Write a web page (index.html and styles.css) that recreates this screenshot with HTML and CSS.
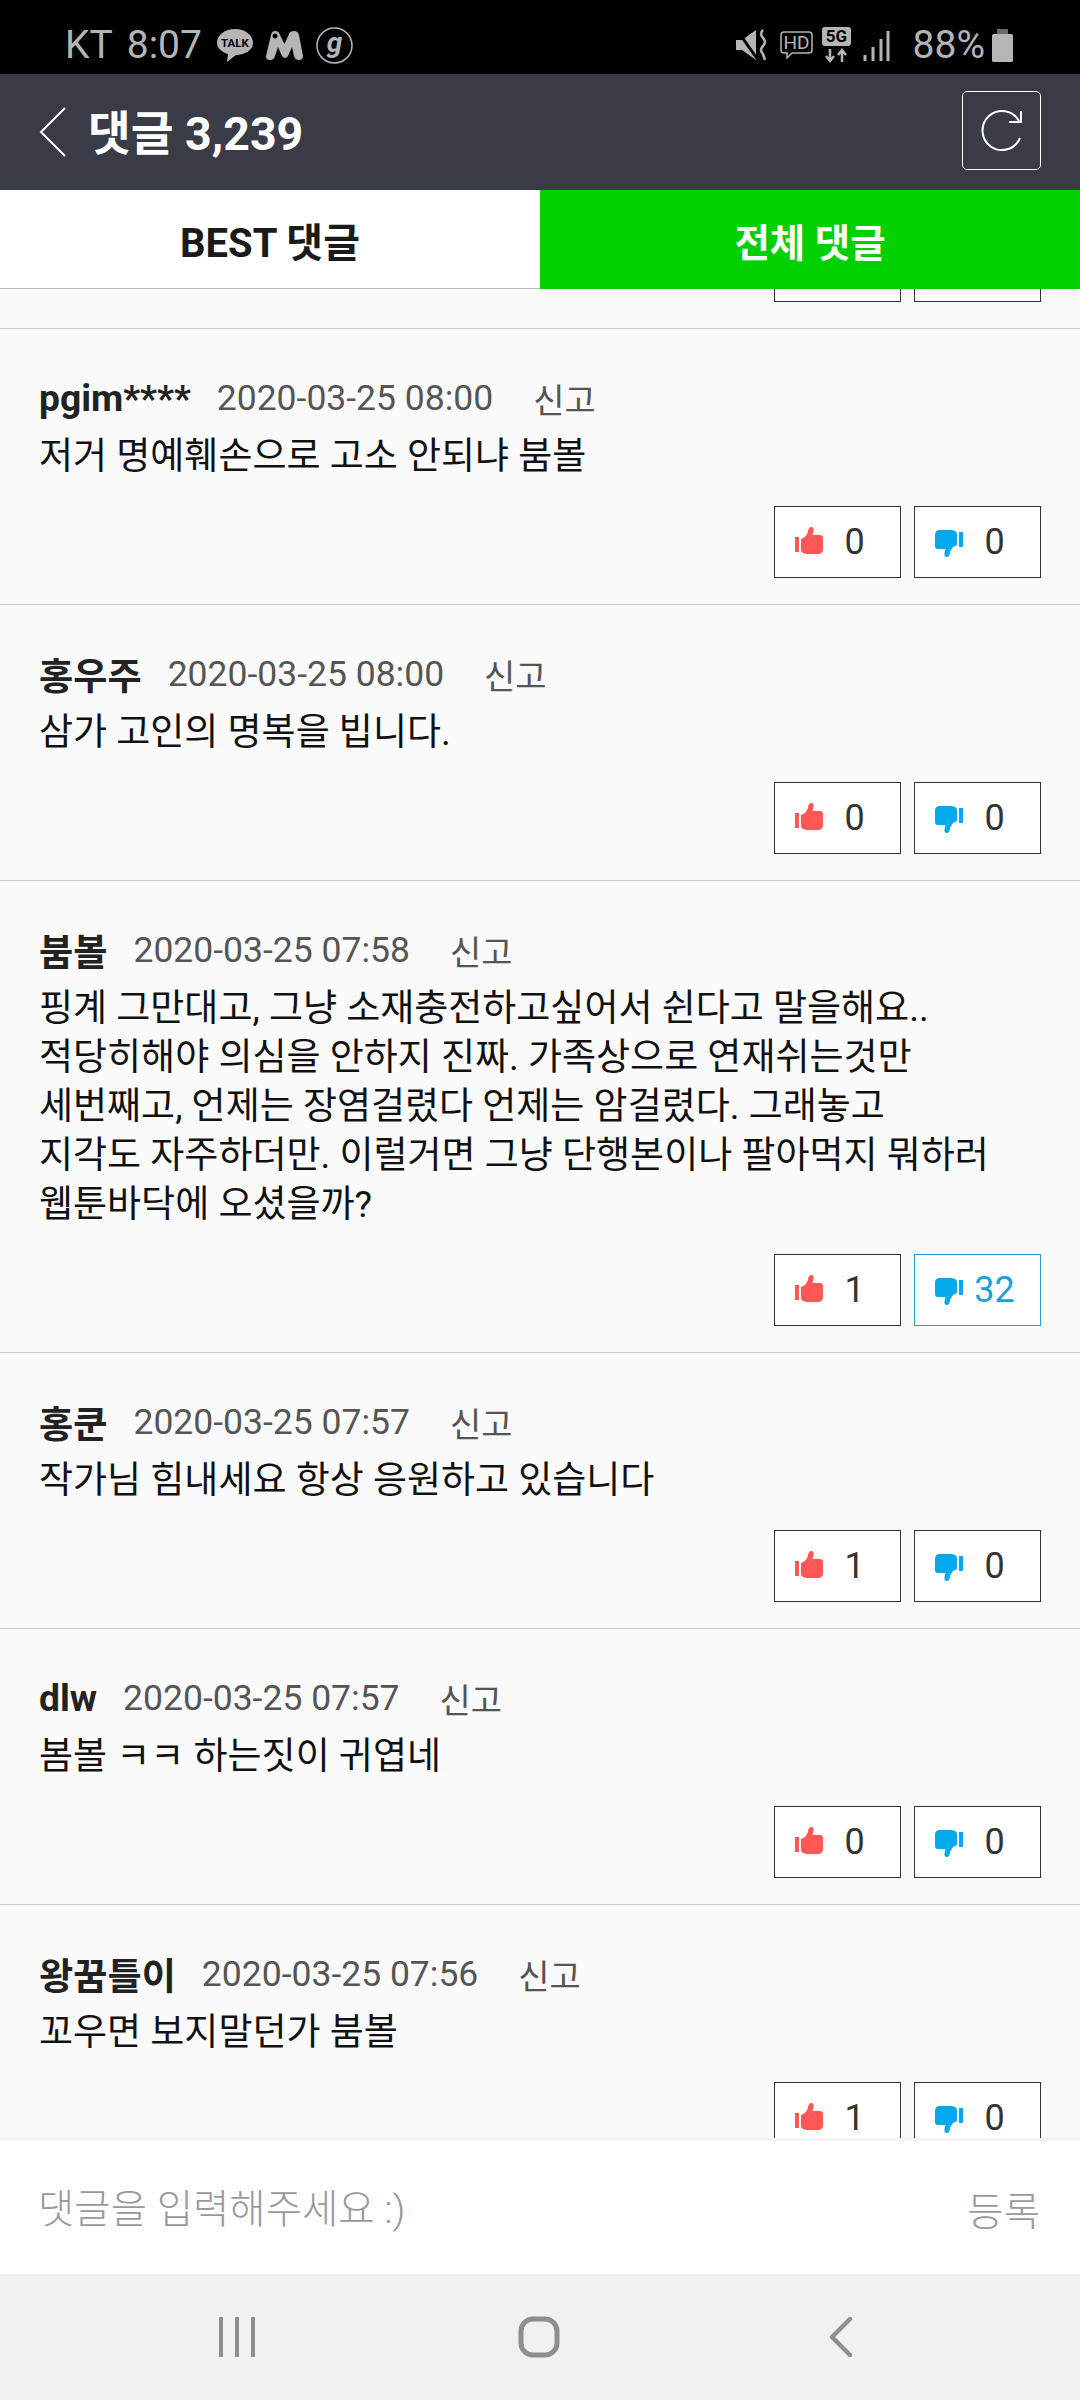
FILE: index.html
```html
<!DOCTYPE html>
<html lang="ko">
<head>
    <meta charset="UTF-8">
    <meta name="viewport" content="width=device-width, initial-scale=1.0">
    <title>댓글 3,239</title>
    <link rel="stylesheet" href="styles.css">
</head>
<body>
    <svg class="defs" width="0" height="0">
        <symbol id="thumb" viewBox="0 0 28 27">
            <rect x="0" y="10" width="4" height="15"/>
            <path d="M6 12 L10 10 Q13.5 6 13.5 2 Q14 0 16.5 0 Q19 0 18.5 4 L17.5 8 H25 Q28 8 28 11 V22 Q28 27 23 27 H12 Q8 27 6 24 Z"/>
        </symbol>
    </svg>

    <div class="app">
        <div class="statusbar">
            <div class="status-left">
                <span class="carrier">KT</span>
                <span class="clock">8:07</span>
                <svg class="ic-talk" width="36" height="34" viewBox="0 0 36 34">
                    <path d="M18 1 C28 1 36 7 36 15 C36 22 28 27 19 27 L10 34 L11 26 C5 24 0 20 0 15 C0 7 8 1 18 1 Z" fill="#b5b5b5"/>
                    <text x="18" y="19" class="talk-text">TALK</text>
                </svg>
                <svg class="ic-m" width="37" height="30" viewBox="0 0 37 30">
                    <path d="M0 26 L5 5 Q6 1 9 1 Q13 1 14 5 L18.500 14 L23 4 Q24 1 28 1 Q32 1 33 5 L37 26 Q37 30 33 30 Q29 30 28 26 L26 17 L22 26 Q19 30 16 26 L12 17 L9 26 Q8 30 4 30 Q0 30 0 26 Z" fill="#b5b5b5"/>
                    <circle cx="9" cy="6" r="2.5" fill="#000"/>
                </svg>
                <svg class="ic-g" width="37" height="37" viewBox="0 0 37 37">
                    <circle cx="18.500" cy="18.500" r="17.500" fill="none" stroke="#b5b5b5" stroke-width="1.500"/>
                    <text x="18.500" y="25" class="g-text">g</text>
                </svg>
            </div>
            <div class="status-right">
                <svg width="31" height="32" viewBox="0 0 31 32">
                    <path d="M0 11 H6 L20 1 V31 L6 21 H0 Z" fill="#b5b5b5"/>
                    <path d="M1 1 L22 31" stroke="#000" stroke-width="3"/>
                    <path d="M27 1 Q23 5 27 9 Q31 13 27 17 Q23 21 27 25 L29 31" fill="none" stroke="#b5b5b5" stroke-width="2.500"/>
                </svg>
                <svg class="ic-hd" width="33" height="28" viewBox="0 0 33 28">
                    <path d="M4 1 H29 Q32 1 32 4 V19 Q32 22 29 22 H12 L7 27 V22 H4 Q1 22 1 19 V4 Q1 1 4 1 Z" fill="none" stroke="#b5b5b5" stroke-width="1.500"/>
                    <text x="16.500" y="18" class="hd-text">HD</text>
                </svg>
                <svg class="ic-5g" width="29" height="36" viewBox="0 0 29 36">
                    <rect x="0" y="0" width="29" height="19" rx="3" fill="#b5b5b5"/>
                    <text x="14.500" y="15" class="fiveg-text">5G</text>
                    <path d="M8 22 V34 M4 29 L8 34 L12 29 M20 35 V23 M16 28 L20 23 L24 28" fill="none" stroke="#b5b5b5" stroke-width="2.500"/>
                </svg>
                <svg class="ic-signal" width="27" height="30" viewBox="0 0 27 30">
                    <path d="M2 24 V30 M10 16 V30 M18 8 V30 M25 0 V30" stroke="#b5b5b5" stroke-width="3"/>
                </svg>
                <span class="battery-num">88%</span>
                <svg class="ic-battery" width="21" height="33" viewBox="0 0 21 33">
                    <rect x="5" y="0" width="11" height="5" fill="#6a6a6a"/>
                    <rect x="0" y="5" width="21" height="28" rx="1.500" fill="#b5b5b5"/>
                </svg>
            </div>
        </div>

        <header class="topbar">
            <div class="topbar-left">
                <svg width="28" height="52" viewBox="0 0 28 52">
                    <path d="M26 2 L2 26 L26 50" fill="none" stroke="#fff" stroke-width="2"/>
                </svg>
                <h1>댓글 3,239</h1>
            </div>
            <button class="refresh" type="button">
                <svg width="42" height="42" viewBox="0 0 42 42">
                    <path d="M39 28 A19.500 19.500 0 1 1 38 11" fill="none" stroke="#fff" stroke-width="2"/>
                    <path d="M28 12 H40 V1" fill="none" stroke="#fff" stroke-width="2"/>
                </svg>
            </button>
        </header>

        <nav class="tabs">
            <a class="tab">BEST 댓글</a>
            <a class="tab active">전체 댓글</a>
        </nav>

        <main class="list">
            <div class="comment clipped">
                <div class="votes">
                    <div class="vote"></div>
                    <div class="vote"></div>
                </div>
            </div>

            <article class="comment">
                <div class="meta"><b>pgim****</b><span class="date">2020-03-25 08:00</span><span class="report">신고</span></div>
                <p>저거 명예훼손으로 고소 안되냐 붐볼</p>
                <div class="votes">
                    <div class="vote"><svg class="up"><use href="#thumb"/></svg><span>0</span></div>
                    <div class="vote"><svg class="down"><use href="#thumb"/></svg><span>0</span></div>
                </div>
            </article>

            <article class="comment">
                <div class="meta"><b>홍우주</b><span class="date">2020-03-25 08:00</span><span class="report">신고</span></div>
                <p>삼가 고인의 명복을 빕니다.</p>
                <div class="votes">
                    <div class="vote"><svg class="up"><use href="#thumb"/></svg><span>0</span></div>
                    <div class="vote"><svg class="down"><use href="#thumb"/></svg><span>0</span></div>
                </div>
            </article>

            <article class="comment">
                <div class="meta"><b>붐볼</b><span class="date">2020-03-25 07:58</span><span class="report">신고</span></div>
                <p>핑계 그만대고, 그냥 소재충전하고싶어서 쉰다고 말을해요..<br>적당히해야 의심을 안하지 진짜. 가족상으로 연재쉬는것만<br>세번째고, 언제는 장염걸렸다 언제는 암걸렸다. 그래놓고<br>지각도 자주하더만. 이럴거면 그냥 단행본이나 팔아먹지 뭐하러<br>웹툰바닥에 오셨을까?</p>
                <div class="votes">
                    <div class="vote"><svg class="up"><use href="#thumb"/></svg><span>1</span></div>
                    <div class="vote hot"><svg class="down"><use href="#thumb"/></svg><span>32</span></div>
                </div>
            </article>

            <article class="comment">
                <div class="meta"><b>홍쿤</b><span class="date">2020-03-25 07:57</span><span class="report">신고</span></div>
                <p>작가님 힘내세요 항상 응원하고 있습니다</p>
                <div class="votes">
                    <div class="vote"><svg class="up"><use href="#thumb"/></svg><span>1</span></div>
                    <div class="vote"><svg class="down"><use href="#thumb"/></svg><span>0</span></div>
                </div>
            </article>

            <article class="comment">
                <div class="meta"><b>dlw</b><span class="date">2020-03-25 07:57</span><span class="report">신고</span></div>
                <p>봄볼 ㅋㅋ 하는짓이 귀엽네</p>
                <div class="votes">
                    <div class="vote"><svg class="up"><use href="#thumb"/></svg><span>0</span></div>
                    <div class="vote"><svg class="down"><use href="#thumb"/></svg><span>0</span></div>
                </div>
            </article>

            <article class="comment">
                <div class="meta"><b>왕꿈틀이</b><span class="date">2020-03-25 07:56</span><span class="report">신고</span></div>
                <p>꼬우면 보지말던가 붐볼</p>
                <div class="votes">
                    <div class="vote"><svg class="up"><use href="#thumb"/></svg><span>1</span></div>
                    <div class="vote"><svg class="down"><use href="#thumb"/></svg><span>0</span></div>
                </div>
            </article>
        </main>

        <form class="write">
            <span class="placeholder">댓글을 입력해주세요 :)</span>
            <span class="submit">등록</span>
        </form>

        <div class="softkeys">
            <svg width="36" height="40" viewBox="0 0 36 40">
                <path d="M2 1 V39 M18 1 V39 M34 1 V39" stroke="#8e8e8e" stroke-width="4" stroke-linecap="round"/>
            </svg>
            <svg class="home" width="42" height="42" viewBox="0 0 42 42">
                <rect x="3" y="3" width="36" height="36" rx="12" fill="none" stroke="#8e8e8e" stroke-width="5"/>
            </svg>
            <svg width="24" height="40" viewBox="0 0 24 40">
                <path d="M21 2 L3 20 L21 38" fill="none" stroke="#8e8e8e" stroke-width="4.500" stroke-linecap="round" stroke-linejoin="round"/>
            </svg>
        </div>
    </div>
</body>
</html>
```

FILE: styles.css
```css
* {
    box-sizing: border-box;
}

body {
    margin: 0;
    font-family: Roboto, 'Noto Sans CJK KR', sans-serif;
    color: #222;
    background-color: #fafafa;
}

.defs {
    position: absolute;
}

.app {
    width: 1080px;
    height: 2400px;
    display: flex;
    flex-direction: column;
    overflow: hidden;
}

/* status bar */
.statusbar {
    height: 74px;
    flex: none;
    background-color: #000;
    color: #b5b5b5;
    display: flex;
    justify-content: space-between;
    align-items: center;
    padding: 16px 67px 0 65px;
    font-size: 39px;
}

.status-left,
.status-right {
    display: flex;
    align-items: center;
}

.clock {
    margin-left: 14px;
}

.ic-talk {
    margin-left: 15px;
}

.ic-m {
    margin-left: 13px;
}

.ic-g {
    margin-left: 13px;
}

.talk-text {
    font-size: 11.500px;
    font-weight: 700;
    text-anchor: middle;
    fill: #000;
}

.g-text {
    font-size: 28px;
    font-weight: 700;
    font-style: italic;
    text-anchor: middle;
    fill: #b5b5b5;
}

.hd-text {
    font-size: 19px;
    text-anchor: middle;
    fill: #b5b5b5;
}

.fiveg-text {
    font-size: 17px;
    font-weight: 700;
    text-anchor: middle;
    fill: #000;
}

.ic-hd {
    margin-left: 13px;
}

.ic-5g {
    margin-left: 9px;
}

.ic-signal {
    margin-left: 12px;
    margin-top: 1px;
}

.battery-num {
    margin-left: 23px;
}

.ic-battery {
    margin-left: 7px;
}

/* top bar */
.topbar {
    height: 116px;
    flex: none;
    background-color: #393c46;
    display: flex;
    justify-content: space-between;
    align-items: center;
    padding: 0 39px 0 39px;
}

.topbar-left {
    display: flex;
    align-items: center;
    gap: 21px;
}

.topbar h1 {
    margin: -6px 0 0;
    color: #fff;
    font-size: 46.500px;
    font-weight: 700;
}

.refresh {
    width: 79px;
    height: 79px;
    margin-top: -3px;
    padding: 0;
    background: none;
    border: 1px solid #fff;
    border-radius: 5px;
    display: flex;
    align-items: center;
    justify-content: center;
}

/* tabs */
.tabs {
    height: 99px;
    flex: none;
    display: flex;
    background-color: #fff;
    border-bottom: 1px solid #bbb;
}

.tab {
    width: 50%;
    height: 99px;
    display: flex;
    align-items: center;
    justify-content: center;
    font-size: 40px;
    font-weight: 700;
    color: #1a1a1a;
}

.tab.active {
    background-color: #00cf00;
    color: #fff;
    font-size: 38.500px;
}

/* comment list */
.list {
    flex: 1;
    min-height: 0;
    overflow: hidden;
    background-color: #fafafa;
}

.comment {
    padding: 45px 39px 26px 39px;
    border-bottom: 1px solid #ccc;
}

.comment.clipped {
    height: 40px;
    padding-top: 0;
    display: flex;
    align-items: flex-end;
    justify-content: flex-end;
    overflow: hidden;
}

.clipped .votes {
    margin-top: 0;
    height: 72px;
    flex: none;
}

.meta {
    height: 48px;
    display: flex;
    align-items: center;
    font-size: 35.500px;
    color: #555;
}

.meta b {
    font-size: 37.200px;
    color: #222;
    margin-right: 26px;
}

.date {
    margin-right: 40px;
}

.report {
    font-size: 34px;
}

.comment p {
    margin: 10px 0 0;
    font-size: 37px;
    line-height: 49px;
    color: #111;
}

.votes {
    margin-top: 25px;
    display: flex;
    justify-content: flex-end;
    gap: 13px;
}

.vote {
    width: 127px;
    height: 72px;
    padding: 0 14px 0 20px;
    display: flex;
    align-items: center;
    background-color: #fff;
    border: 1px solid #333;
    font-size: 36px;
    color: #333;
}

.vote span {
    flex: 1;
    text-align: center;
}

.vote svg {
    width: 28px;
    height: 27px;
    flex: none;
}

.up {
    fill: #ff5656;
    margin-top: -3px;
}

.down {
    fill: #00a9ec;
    margin-top: 3px;
    transform: rotate(180deg);
}

.vote.hot {
    border-color: #22a0d0;
    color: #1c9fd8;
}

/* comment input */
.write {
    height: 136px;
    flex: none;
    background-color: #fff;
    border-top: 3px solid #f3f3f3;
    display: flex;
    justify-content: space-between;
    align-items: center;
    padding: 0 40px 4px 38px;
    font-size: 39.500px;
    font-weight: 300;
    color: #999;
}

.submit {
    margin-top: 6px;
}

/* android nav */
.softkeys {
    height: 126px;
    flex: none;
    background-color: #f1f1f1;
    display: flex;
    justify-content: center;
    align-items: center;
    gap: 266px;
    padding: 0 8px 0 0;
}

.home {
    margin: 0 3px 0 -3px;
}
```
